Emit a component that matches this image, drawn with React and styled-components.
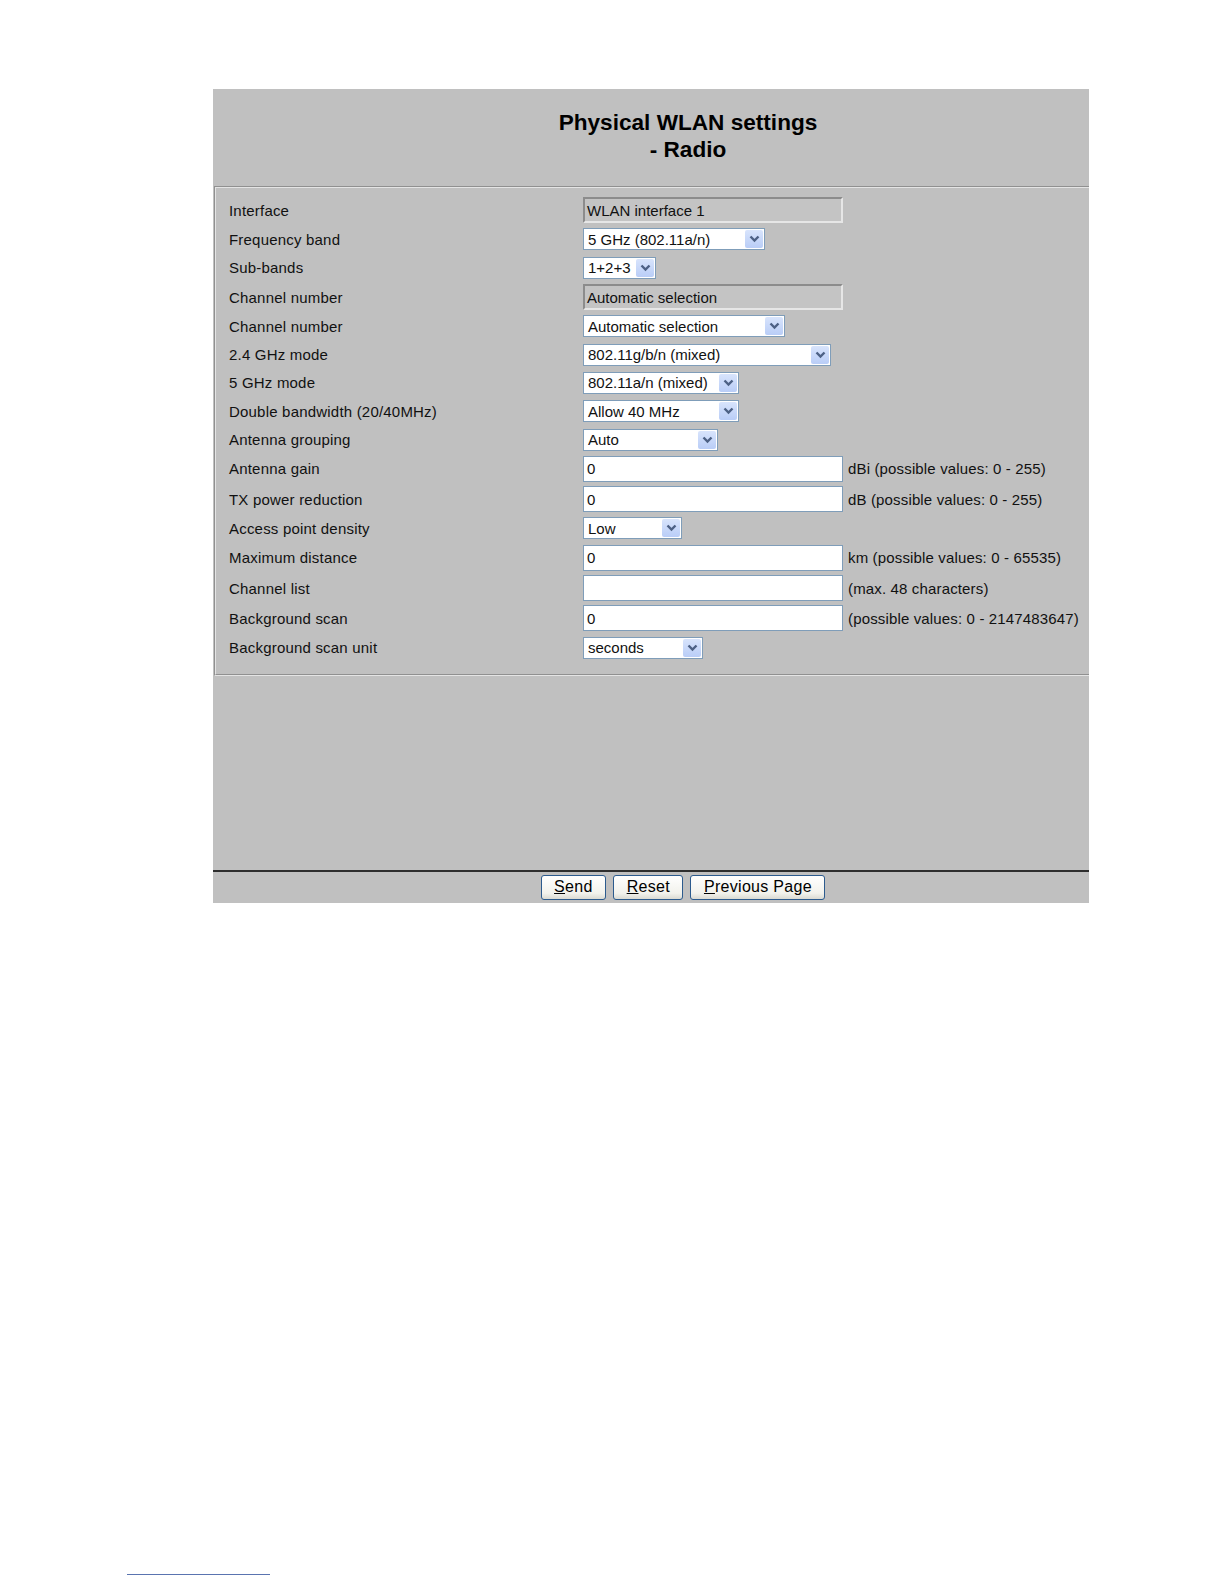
import React from 'react';
import styled, { createGlobalStyle } from 'styled-components';

const GlobalStyle = createGlobalStyle`
  html, body {
    margin: 0;
    padding: 0;
    background: #fff;
  }
  body {
    font-family: "Liberation Sans", Arial, sans-serif;
    color: #111;
  }
`;

const Page = styled.div`
  display: flex;
  flex-direction: column;
  padding-top: 89px;
`;

const Panel = styled.div`
  width: 876px;
  margin-left: 213px;
  background: #c0c0c0;
`;

const Header = styled.div`
  padding: 20px 0 23px 74px;
  text-align: center;
  font-size: 22.6px;
  line-height: 27px;
  font-weight: bold;
  color: #000;
`;

const FormBox = styled.div`
  margin-left: 1px;
  border: 2px groove #e4e4e4;
  border-right: none;
  padding: 7px 0 12px 13px;
`;

const Row = styled.div`
  display: grid;
  grid-template-columns: 354px auto 1fr;
  align-items: center;
  min-height: 28.3px;
  box-sizing: border-box;
  padding: 2px 0;
`;

const Label = styled.div`
  font-size: 15px;
  letter-spacing: 0.2px;
`;

const Hint = styled.div`
  font-size: 15px;
  padding-left: 5px;
  white-space: nowrap;
  letter-spacing: 0.15px;
`;

const TextInput = styled.div`
  width: 260px;
  height: 26.3px;
  box-sizing: border-box;
  display: flex;
  align-items: center;
  font-size: 15px;
  background: ${p => (p.$readOnly ? '#c4c4c4' : '#fff')};
  border: ${p => (p.$readOnly ? '2px solid' : '1px solid #7f9db9')};
  border-color: ${p => (p.$readOnly ? '#8c8c8c #e6e6e6 #e6e6e6 #8c8c8c' : '#7f9db9')};
  padding-left: ${p => (p.$readOnly ? '2px' : '3px')};
`;

const Select = styled.div`
  width: ${p => p.$width}px;
  height: 22px;
  box-sizing: border-box;
  background: #fff;
  border: 1px solid #7f9db9;
  display: flex;
  align-items: center;
  justify-content: space-between;
  font-size: 15px;
  padding: 0 1px 0 4px;
  white-space: nowrap;
`;

const Arrow = styled.span`
  width: 18px;
  height: 18px;
  background: linear-gradient(#d8e4fc, #b9cdf7);
  border-radius: 2px;
  display: flex;
  align-items: center;
  justify-content: center;
`;

const Spacer = styled.div`
  height: 194px;
`;

const ButtonBar = styled.div`
  border-top: 2px solid #2e2e2e;
  height: 31px;
  display: flex;
  justify-content: center;
  align-items: center;
  gap: 7px;
  padding-left: 64px;
`;

const Button = styled.button`
  height: 25px;
  padding: 0 12.5px;
  font-family: "Liberation Sans", Arial, sans-serif;
  font-size: 16px;
  letter-spacing: 0.3px;
  color: #000;
  background: linear-gradient(#ffffff, #f2f2ec 75%, #dadad2);
  border: 1px solid #2c5b8e;
  border-radius: 3px;
  u {
    text-decoration: underline;
  }
`;

const FootRule = styled.div`
  margin-top: 671px;
  margin-left: 127px;
  width: 143px;
  border-top: 1px solid #5a74b0;
`;

const Chevron = () => (
  <svg width="11" height="8" viewBox="0 0 11 8">
    <path d="M1.5 1.5 L5.5 5.5 L9.5 1.5" fill="none" stroke="#4d6185" strokeWidth="2.4" />
  </svg>
);

const SelectBox = ({ value, width }) => (
  <Select $width={width}>
    <span>{value}</span>
    <Arrow>
      <Chevron />
    </Arrow>
  </Select>
);

const rows = [
  { label: 'Interface', type: 'readonly', value: 'WLAN interface 1' },
  { label: 'Frequency band', type: 'select', value: '5 GHz (802.11a/n)', width: 182 },
  { label: 'Sub-bands', type: 'select', value: '1+2+3', width: 73 },
  { label: 'Channel number', type: 'readonly', value: 'Automatic selection' },
  { label: 'Channel number', type: 'select', value: 'Automatic selection', width: 202 },
  { label: '2.4 GHz mode', type: 'select', value: '802.11g/b/n (mixed)', width: 248 },
  { label: '5 GHz mode', type: 'select', value: '802.11a/n (mixed)', width: 156 },
  { label: 'Double bandwidth (20/40MHz)', type: 'select', value: 'Allow 40 MHz', width: 156 },
  { label: 'Antenna grouping', type: 'select', value: 'Auto', width: 135 },
  { label: 'Antenna gain', type: 'input', value: '0', hint: 'dBi (possible values: 0 - 255)' },
  { label: 'TX power reduction', type: 'input', value: '0', hint: 'dB (possible values: 0 - 255)' },
  { label: 'Access point density', type: 'select', value: 'Low', width: 99 },
  { label: 'Maximum distance', type: 'input', value: '0', hint: 'km (possible values: 0 - 65535)' },
  { label: 'Channel list', type: 'input', value: '', hint: '(max. 48 characters)' },
  { label: 'Background scan', type: 'input', value: '0', hint: '(possible values: 0 - 2147483647)' },
  { label: 'Background scan unit', type: 'select', value: 'seconds', width: 120 },
];

const Control = ({ row }) => {
  if (row.type === 'select') return <SelectBox value={row.value} width={row.width} />;
  return <TextInput $readOnly={row.type === 'readonly'}>{row.value}</TextInput>;
};

export default function App() {
  return (
    <Page>
      <GlobalStyle />
      <Panel>
        <Header>
          Physical WLAN settings
          <br />- Radio
        </Header>
        <FormBox>
          {rows.map((row, i) => (
            <Row key={i}>
              <Label>{row.label}</Label>
              <Control row={row} />
              <Hint>{row.hint}</Hint>
            </Row>
          ))}
        </FormBox>
        <Spacer />
        <ButtonBar>
          <Button><u>S</u>end</Button>
          <Button><u>R</u>eset</Button>
          <Button><u>P</u>revious Page</Button>
        </ButtonBar>
      </Panel>
      <FootRule />
    </Page>
  );
}
